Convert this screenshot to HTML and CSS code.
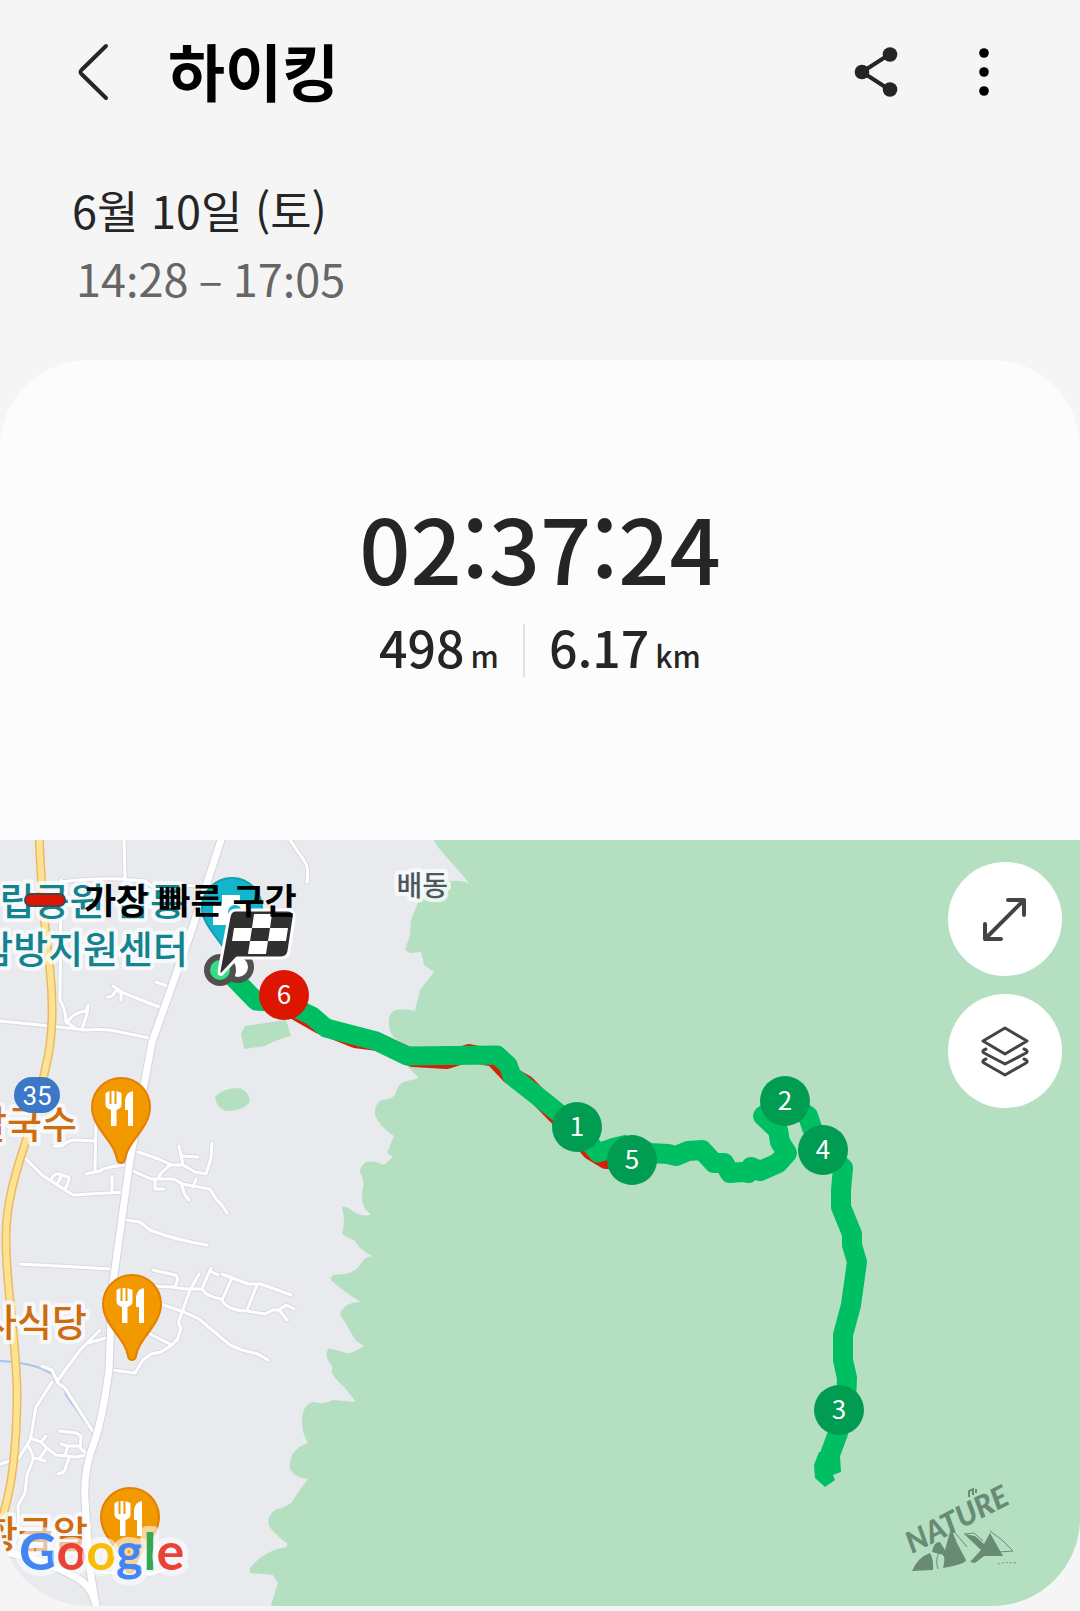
FILE: index.html
```html
<!DOCTYPE html>
<html lang="ko">
<head>
<meta charset="utf-8">
<meta name="viewport" content="width=device-width, initial-scale=1">
<title>하이킹</title>
<link rel="stylesheet" href="styles.css">
</head>
<body>
<header class="app-bar">
  <button class="icon-button" type="button" aria-label="뒤로">
    <svg width="36" height="64" viewBox="0 0 36 64" fill="none" stroke="#252525" stroke-width="4" stroke-linecap="round" stroke-linejoin="round"><path d="M30 6 6 29.500Q3 32 6 34.500L30 58"/></svg>
  </button>
  <h1 class="title">하이킹</h1>
  <div class="actions">
    <button class="icon-button" type="button" aria-label="공유">
      <svg width="48" height="56" viewBox="0 0 48 56" fill="#252525"><path d="M38 10 10 28 38 46" fill="none" stroke="#252525" stroke-width="4"/><circle cx="38" cy="10.500" r="7.300"/><circle cx="10" cy="28" r="7.300"/><circle cx="38" cy="45.500" r="7.300"/></svg>
    </button>
    <button class="icon-button" type="button" aria-label="더보기">
      <svg width="16" height="56" viewBox="0 0 16 56"><circle cx="8" cy="9" r="4.800"/><circle cx="8" cy="28" r="4.800"/><circle cx="8" cy="47" r="4.800"/></svg>
    </button>
  </div>
</header>

<section class="when">
  <p class="date">6월 10일 (토)</p>
  <p class="time">14:28 – 17:05</p>
</section>

<main class="card">
  <section class="summary">
    <p class="duration">02:37:24</p>
    <div class="metrics">
      <p class="metric">498 <span class="unit">m</span></p>
      <p class="metric">6.17 <span class="unit">km</span></p>
    </div>
  </section>

  <section class="map">
    <svg class="map-canvas" viewBox="0 840 1080 766" role="img" aria-label="하이킹 경로">
      <defs>
        <g id="food">
          <path d="M0 56C-5 56-3 51-7 43C-13 30-29 18-29 0A29 29 0 0 1 29 0C29 18 13 30 7 43C3 51 5 56 0 56Z" fill="#f29900" stroke="#e37f05" stroke-width="2"/>
          <path d="M-15.500-14-11.500-16V-3H-9.500V-16H-6.500V-3H-4.500V-16L.5-14V-2Q.5 1-4.500 3V19H-10V3Q-15.500 1-15.500-2ZM12-16V19H7V3H4V-7Q5-15 12-16Z" fill="#fff"/>
        </g>
        <g id="lanes">
          <path d="M124 840 125 878M60 882Q95 878 120 879L145 881 152 886M178 888Q195 882 202 890M290 840 305 862Q309 868 307 882M61 880 60 1000Q66 1010 66 1022L77 1029 84 1030Q96 1029 110 1030L154 1039M0 1021 30 1024 77 1029M68 1022Q72 1013 86 1011L88 1005M82 1029 87 1014 88 1005M156 982 172 988M107 997Q113 998 116 990L164 1009M113 986 121 991 121 1000"/>
          <path d="M96 1120 95 1171M54 1146H62Q68 1140 75 1140L95 1141M86 1174 100 1171Q106 1166 130 1165M25 1158 42 1175 73 1195 124 1192M51 1180Q54 1173 59 1174L68 1177Q71 1178 65 1189M62 1175 57 1184M112 1176V1191M138 1152 153 1157 161 1160 171 1165H183L195 1172 206 1174 211 1158 212 1143M179 1146 183 1165M181 1156 198 1157M171 1164 161 1173 158 1179M133 1171 151 1179H174L182 1184 210 1189 216 1199 222 1205 227 1213M155 1179V1189H164M181 1183 185 1195 189 1200M193 1187 196 1179M126 1220 140 1222 150 1230Q175 1240 207 1245M20 1264 112 1269M153 1270 175 1275Q180 1277 175 1286M150 1286 172 1287 186 1289 202 1289Q207 1297 222 1299Q225 1310 247 1311L265 1314 273 1310H279L286 1305 294 1309M279 1310 287 1320M202 1289 211 1268M199 1274 190 1290 180 1318Q177 1324 181 1328L177 1341M210 1271 218 1275M222 1274 248 1284 261 1284 291 1295M232 1278 222 1300M257 1285 247 1310M155 1302 184 1312 199 1319 230 1345 242 1350 258 1354 268 1360"/>
          <path d="M100 1330 80 1350 58 1380M113 1336 88 1343M42 1366 52 1370 58 1383 65 1388 92 1430 98 1434M52 1382 36 1407 32 1430 30 1440 22 1453 19 1458 0 1464M27 1444Q34 1455 33 1460L27 1475 25 1493 18 1506Q20 1530 14 1545M30 1438 41 1442 46 1436M41 1442 47 1448 39 1459 34 1458M39 1459 45 1461M47 1448 56 1455 76 1457 92 1454M60 1431 76 1433 81 1436 80 1448 90 1456M61 1444 68 1446 65 1455M68 1446 78 1446M69 1458 64 1472 58 1474M112 1370 135 1373 143 1360 151 1354 161 1352 172 1345 178 1338M150 1334 172 1345M95 1572 150 1574 165 1570"/>
        </g>
        <path id="main-road" d="M221 840 190 935 152 1042 130 1160 112 1290 109 1370Q103 1415 95 1440Q83 1470 85 1500L90 1570 96 1606M10 1553Q50 1562 75 1577Q92 1585 96 1606"/>
        <path id="highway" d="M39 832Q42 910 50 970Q56 1030 45 1070C35 1130 5 1180 6 1240C6 1290 18 1350 17 1400Q16 1470 5 1508L-4 1550"/>
      </defs>
      <rect y="840" width="1080" height="766" fill="#e8eaed"/>
      <g fill="#b4dfc1">
        <path d="M434 840C438 850 455 865 469 883Q458 880 452 881L430 880 418 890 418 903 411 920 410 935 405 950 410 953 421 952 424 965 434 972 420 990 415 1011Q404 1008 396 1010T389 1025T401 1042L408 1067 419 1078 404 1082Q397 1085 396 1093Q393 1100 381 1100Q374 1105 375 1115Q379 1126 394 1136L387 1153 393 1157 384 1165Q374 1160 366 1162Q360 1166 360 1172Q366 1182 362 1192Q361 1209 371 1214Q366 1218 354 1212Q344 1204 342 1208Q346 1220 342 1233Q346 1238 354 1240Q362 1252 373 1256Q364 1257 362 1262C354 1275 345 1274 333 1275Q330 1277 331 1280Q345 1293 361 1302Q344 1302 340 1314L356 1341Q363 1345 364 1346Q352 1354 346 1353Q330 1348 328 1349Q324 1357 332 1366V1373Q334 1378 345 1388L356 1402 333 1400Q325 1405 314 1402Q302 1404 302 1422Q302 1433 308 1443Q288 1450 290 1469Q295 1478 308 1479Q299 1490 292 1502Q285 1508 277 1509Q266 1515 269 1526Q275 1535 287 1543V1547Q264 1550 250 1568V1573L273 1575 278 1583Q275 1592 271 1606H1080V840Z"/>
        <path d="M245 1026 286 1020 291 1036Q275 1040 265 1046L244 1049 241 1034ZM215 1097Q222 1088 240 1088Q252 1094 249 1103Q242 1111 226 1111Q216 1107 215 1097Z"/>
      </g>
      <g fill="none" stroke-linejoin="round" stroke-linecap="round">
        <path d="M0 1361Q60 1364 66 1395L98 1440" stroke="#a5c3f0" stroke-width="2"/>
        <use href="#lanes" stroke="#d7dae0" stroke-width="5"/>
        <use href="#lanes" stroke="#fff" stroke-width="3"/>
        <use href="#main-road" stroke="#d2d5db" stroke-width="9"/>
        <use href="#main-road" stroke="#fff" stroke-width="7"/>
        <use href="#highway" stroke="#edb95e" stroke-width="9"/>
        <use href="#highway" stroke="#fde293" stroke-width="6"/>
      </g>

      <g class="place place-park">
        <text x="185" y="915">국립공원 삼릉</text>
        <text x="188" y="963">탐방지원센터</text>
      </g>
      <g class="place place-food">
        <text x="77" y="1138">칼국수</text>
        <text x="87" y="1336">기사식당</text>
        <text x="88" y="1548">황금알</text>
      </g>
      <text class="place place-town" x="448" y="896">배동</text>

      <path d="M232 965C228 945 202 928 202 908A30 30 0 0 1 262 908C262 928 236 945 232 965Z" fill="#12b5cb" stroke="#129eaf" stroke-width="2"/>
      <path d="M213 903H222V895H240V903H246V925H213Z" fill="#fff"/><circle cx="235" cy="912" r="7" fill="#12b5cb"/>
      <use href="#food" x="121" y="1107"/>
      <use href="#food" x="132" y="1304"/>
      <use href="#food" x="130" y="1517"/>
      <rect x="14" y="1077" width="46" height="36" rx="18" fill="#3b78c8"/>
      <text class="road-number" x="37" y="1105">35</text>

      <g fill="none" stroke-linejoin="round">
        <path d="M285 1005 320 1025 355 1039 378 1042 413 1058 447 1060 469 1053 494 1058 510 1075 526 1084 556 1115 577 1135 591 1151 606 1160 632 1160" stroke="#d81e05" stroke-width="18"/>
        <path d="M226 970 256 1001 285 1003 312 1016 326 1028 376 1041 407 1056 497 1055 508 1065 512 1076 550 1106 577 1128 598 1153 615 1147 628 1144" stroke="#00bf63" stroke-width="19"/>
        <path d="M628 1144 650 1153 668 1154 676 1156 688 1151 702 1150 714 1163 724 1163 730 1173 742 1172 748 1173 751 1167 760 1171 778 1163 787 1153 780 1142 778 1130 763 1116 785 1101 808 1116 812 1128 823 1150 843 1168 841 1190 841 1207 852 1234 852 1245 857 1262 851 1305 843 1335 843 1360 847 1378 846 1400 838 1433 828 1460" stroke="#00bf63" stroke-width="20"/>
      </g>
      <path d="M819 1452 840 1456 841 1472 833 1475 835 1480 825 1487 815 1478 814 1465Z" fill="#00bf63"/>

      <circle cx="238" cy="967" r="13" fill="#fff" stroke="#505050" stroke-width="6"/>
      <circle cx="220" cy="970" r="13" fill="#35dd86" stroke="#505050" stroke-width="6"/>
      <path d="M236 910H287Q295 910 294 918L289 951Q288 958 281 958H237L222 974Q219 976 219 971L229 917Q230 910 236 910Z" fill="#303030" stroke="#fff" stroke-width="3" stroke-linejoin="round"/>
      <path d="M254 914H272L270 928H288L286 941H268L266 954H248L250 941H232L234 928H252ZM252 928 250 941H268L270 928Z" fill="#fff" fill-rule="evenodd"/>

      <g class="km">
        <g fill="#009c52"><circle cx="577" cy="1127" r="25"/><circle cx="632" cy="1160" r="25"/><circle cx="785" cy="1101" r="25"/><circle cx="823" cy="1150" r="25"/><circle cx="839" cy="1410" r="25"/></g>
        <circle cx="284" cy="995" r="25" fill="#dc1600"/>
        <g fill="#fff"><text x="577" y="1136">1</text><text x="632" y="1169">5</text><text x="785" y="1110">2</text><text x="823" y="1159">4</text><text x="839" y="1419">3</text><text x="284" y="1004">6</text></g>
      </g>

      <rect x="25" y="894" width="40" height="12" rx="6" fill="#dc1600" stroke="#49454a" stroke-width="2"/>
      <text class="legend" x="84" y="914">가장 빠른 구간</text>

      <text class="google" x="19" y="1570"><tspan fill="#4285f4">G</tspan><tspan fill="#ea4335">o</tspan><tspan fill="#fbbc05">o</tspan><tspan fill="#4285f4">g</tspan><tspan fill="#34a853">l</tspan><tspan fill="#ea4335">e</tspan></text>

      <g fill="#698b75">
        <text class="nature" transform="translate(912 1554) rotate(-27)">NATURE</text>
        <path d="M912 1571Q918 1557 930 1553Q934 1560 933 1570ZM932 1552Q934 1541 940 1542L945 1550 951 1528 957 1543 966 1560Q966 1564 943 1568Q947 1553 939 1554ZM970 1562 981 1550 964 1534 975 1536 984 1544 990 1533 1003 1556 984 1556 975 1563Z"/>
        <path d="M951 1528 967 1547M964 1534 974 1533 983 1541M990 1531 1002 1540 1013 1551 999 1552M938 1569Q935 1560 939 1553" fill="none" stroke="#698b75"/>
        <path d="M998 1564Q1004 1562 1016 1563" fill="none" stroke="#698b75" stroke-dasharray="2 2"/>
        <path d="M969 1497V1491L973 1489V1495M976 1493V1489" fill="none" stroke="#698b75" stroke-width="2"/>
      </g>
    </svg>

    <div class="map-tools">
      <button class="round-button" type="button" aria-label="지도 확대">
        <svg width="56" height="56" viewBox="0 0 56 56" fill="none" stroke="#444" stroke-width="4" stroke-linecap="round" stroke-linejoin="round"><path d="M31 9H47V24M8 33V48H24M47 9 8 48"/></svg>
      </button>
      <button class="round-button" type="button" aria-label="지도 레이어">
        <svg width="56" height="56" viewBox="0 0 56 56" fill="none" stroke="#444" stroke-width="3" stroke-linecap="round" stroke-linejoin="round"><path d="M28 5 50 18 28 31 6 18ZM9 26Q4 28 7 30L28 41 49 30Q52 28 47 26M9 36Q4 38 7 40L28 52 49 40Q52 38 47 36"/></svg>
      </button>
    </div>
  </section>
</main>
</body>
</html>
```
FILE: styles.css
```css
* {
  box-sizing: border-box;
}

body {
  margin: 0;
  background: #f5f5f5;
  color: #252525;
  font-family: "Noto Sans CJK KR", sans-serif;
}

h1,
p {
  margin: 0;
}

button {
  border: 0;
  padding: 0;
  background: none;
  cursor: pointer;
}

svg {
  display: block;
}

.app-bar {
  display: flex;
  align-items: center;
  gap: 56px;
  height: 144px;
  padding: 0 88px 0 76px;
}

.title {
  flex: 1;
  padding-bottom: 4px;
  color: #000;
  font-size: 62px;
  font-weight: 700;
  line-height: 80px;
}

.actions {
  display: flex;
  gap: 76px;
}

.when {
  padding: 32px 72px 48px;
}

.date,
.time {
  font-size: 45px;
  line-height: 68px;
}

.time {
  padding-left: 4px;
  color: #666;
}

.card {
  overflow: hidden;
  border-radius: 88px;
  background: #fcfcfc;
}

.summary {
  padding: 124px 24px 148px;
  text-align: center;
}

.duration {
  font-size: 90px;
  font-weight: 500;
  line-height: 124px;
}

.metrics {
  display: flex;
  justify-content: center;
  align-items: center;
  height: 84px;
}

.metric {
  padding: 0 24px;
  font-size: 50px;
  font-weight: 500;
  line-height: 44px;
}

.metric + .metric {
  border-left: 2px solid #e2e2e2;
}

.unit {
  margin-left: -8px;
  font-size: 30px;
}

.map {
  position: relative;
}

.map-canvas {
  width: 100%;
  height: auto;
}

.place {
  paint-order: stroke;
  stroke: rgba(250, 253, 255, 0.8);
  stroke-width: 8px;
  stroke-linejoin: round;
  font-size: 38px;
  font-weight: 500;
  text-anchor: end;
}

.place-park {
  fill: #12838f;
}

.place-food {
  fill: #cf6c0c;
}

.place-town {
  fill: #50555c;
  font-size: 28px;
}

.road-number {
  fill: #fff;
  font-family: Roboto, sans-serif;
  font-size: 26px;
  text-anchor: middle;
}

.km {
  font-size: 26px;
  text-anchor: middle;
}

.legend {
  fill: #000;
  font-size: 35px;
  font-weight: 700;
}

.google {
  paint-order: stroke;
  stroke: rgba(250, 252, 255, 0.6);
  stroke-width: 12px;
  stroke-linejoin: round;
  font-family: Lato, sans-serif;
  font-size: 52px;
  font-weight: 700;
}

.nature {
  font-family: Lato, sans-serif;
  font-size: 30px;
  font-style: italic;
  font-weight: 900;
}

.map-tools {
  position: absolute;
  top: 22px;
  right: 18px;
  display: grid;
  gap: 18px;
}

.round-button {
  display: grid;
  place-items: center;
  width: 114px;
  height: 114px;
  border-radius: 50%;
  background: #fff;
}
```
